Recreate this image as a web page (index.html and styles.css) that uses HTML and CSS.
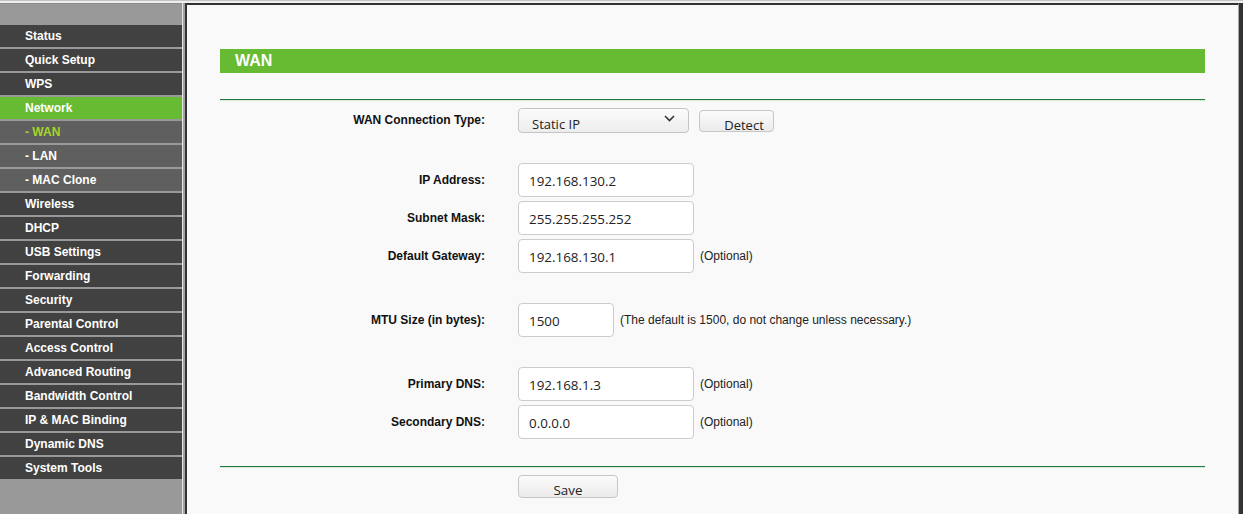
FILE: index.html
```html
<!DOCTYPE html>
<html>
<head>
<meta charset="utf-8">
<title>WAN</title>
<link rel="stylesheet" href="styles.css">
</head>
<body>
<div class="topline"></div>
<div class="frame">
  <nav class="sidebar">
    <ul class="menu">
      <li class="item">Status</li>
      <li class="item">Quick Setup</li>
      <li class="item">WPS</li>
      <li class="item active">Network</li>
      <li class="item sub current">- WAN</li>
      <li class="item sub">- LAN</li>
      <li class="item sub">- MAC Clone</li>
      <li class="item">Wireless</li>
      <li class="item">DHCP</li>
      <li class="item">USB Settings</li>
      <li class="item">Forwarding</li>
      <li class="item">Security</li>
      <li class="item">Parental Control</li>
      <li class="item">Access Control</li>
      <li class="item">Advanced Routing</li>
      <li class="item">Bandwidth Control</li>
      <li class="item">IP &amp; MAC Binding</li>
      <li class="item">Dynamic DNS</li>
      <li class="item">System Tools</li>
    </ul>
  </nav>
  <div class="divider"></div>
  <main class="content">
    <h1 class="title">WAN</h1>
    <div class="rule rule-top"></div>

    <div class="form">
      <div class="row row-type">
        <label class="label">WAN Connection Type:</label>
        <div class="field">
          <div class="select">
            <span class="select-clip"><span class="select-text">Static IP</span></span>
            <svg class="chevron" width="11" height="7" viewBox="0 0 11 7"><path d="M1 1 L5.5 5.5 L10 1" fill="none" stroke="#333" stroke-width="1.6"/></svg>
          </div>
          <button class="btn btn-detect">Detect</button>
        </div>
      </div>

      <div class="row row-input group">
        <label class="label">IP Address:</label>
        <div class="field"><input class="input" value="192.168.130.2"></div>
      </div>
      <div class="row row-input">
        <label class="label">Subnet Mask:</label>
        <div class="field"><input class="input" value="255.255.255.252"></div>
      </div>
      <div class="row row-input">
        <label class="label">Default Gateway:</label>
        <div class="field"><input class="input" value="192.168.130.1"><span class="note">(Optional)</span></div>
      </div>

      <div class="row row-input group">
        <label class="label">MTU Size (in bytes):</label>
        <div class="field"><input class="input input-short" value="1500"><span class="note">(The default is 1500, do not change unless necessary.)</span></div>
      </div>

      <div class="row row-input group">
        <label class="label">Primary DNS:</label>
        <div class="field"><input class="input" value="192.168.1.3"><span class="note">(Optional)</span></div>
      </div>
      <div class="row row-input">
        <label class="label">Secondary DNS:</label>
        <div class="field"><input class="input" value="0.0.0.0"><span class="note">(Optional)</span></div>
      </div>
    </div>

    <div class="rule rule-bottom"></div>
    <div class="actions">
      <button class="btn btn-save">Save</button>
    </div>
  </main>
</div>
</body>
</html>
```
FILE: styles.css
```css
html, body {
  margin: 0;
  padding: 0;
  height: 514px;
  overflow: hidden;
  background: #efefef;
  font-family: "Liberation Sans", Arial, sans-serif;
}

.topline {
  height: 1px;
  background: #c4c4c4;
  margin-bottom: 2px;
}

.frame {
  display: flex;
  height: 511px;
}

/* Sidebar */
.sidebar {
  width: 182px;
  flex: none;
  background: #999999;
  border-top: 1px solid #8a8a8a;
  box-sizing: border-box;
}

.menu {
  list-style: none;
  margin: 21px 0 0 0;
  padding: 0;
}

.item {
  height: 22px;
  line-height: 22px;
  margin-bottom: 2px;
  padding-left: 25px;
  background: #414141;
  color: #ffffff;
  font-size: 12px;
  font-weight: bold;
  white-space: nowrap;
}

.item.active {
  background: #66bb33;
}

.item.sub {
  background: #5f5f5f;
}

.item.current {
  color: #a6d52a;
}

.divider {
  width: 1px;
  flex: none;
  background: #e6e6e6;
  border-right: 2px solid #a3a3a3;
}

/* Content */
.content {
  flex: 1;
  background: #f9f9f9;
  border-top: 2px solid #333333;
  border-left: 2px solid #333333;
  border-right: 1px solid #a8a8a8;
  box-shadow: 4px 0 0 #333333;
  margin-right: 4px;
  padding: 0 33px 0 33px;
  box-sizing: border-box;
  display: flex;
  flex-direction: column;
}

.title {
  margin: 44px 0 0 0;
  height: 24px;
  line-height: 24px;
  padding-left: 15px;
  background: #66bb33;
  color: #ffffff;
  font-size: 16px;
  font-weight: bold;
}

.rule {
  height: 1px;
  background: #227a40;
  box-shadow: 0 1px 0 #d9e8dd;
}

.rule-top {
  margin-top: 26px;
}

.form {
  display: flex;
  flex-direction: column;
  gap: 4px;
  margin-top: 8px;
}

.row {
  display: grid;
  grid-template-columns: 265px auto;
  column-gap: 33px;
  align-items: center;
}

.row-type {
  height: 25px;
  align-items: start;
}

.row-type .label {
  line-height: 25px;
}

.row-input {
  height: 34px;
}

.row.group {
  margin-top: 26px;
}

.label {
  text-align: right;
  font-size: 12px;
  font-weight: bold;
  color: #111111;
  white-space: nowrap;
}

.field {
  display: flex;
  align-items: center;
}

.row-type .field {
  align-items: flex-start;
}

.select {
  width: 171px;
  height: 25px;
  box-sizing: border-box;
  border: 1px solid #c4c4c4;
  border-radius: 4px;
  background: linear-gradient(#fbfbfb, #ededed);
  display: flex;
  align-items: flex-start;
}

.select-clip {
  display: block;
  height: 20px;
  overflow: hidden;
  padding-left: 13px;
}

.select-text {
  display: block;
  padding-top: 8px;
  line-height: 14px;
  font-family: "Open Sans", "Noto Sans", sans-serif;
  font-size: 13px;
  color: #222222;
}

.chevron {
  margin-left: auto;
  margin-right: 13px;
  margin-top: 6px;
}

.btn {
  box-sizing: border-box;
  border: 1px solid #c6c6c6;
  border-radius: 4px;
  background: linear-gradient(#fbfbfb, #ebebeb);
  font-family: "Open Sans", "Noto Sans", sans-serif;
  font-size: 13px;
  line-height: 14px;
  color: #222222;
  margin: 0;
  text-align: center;
}

.btn-detect {
  width: 75px;
  height: 22px;
  margin-left: 10px;
  margin-top: 2px;
  padding: 7px 0 0 15px;
}

.input {
  width: 176px;
  height: 34px;
  box-sizing: border-box;
  border: 1px solid #cccccc;
  border-radius: 4px;
  background: #ffffff;
  padding: 2px 10px 0 10px;
  margin: 0;
  font-family: "Open Sans", "Noto Sans", sans-serif;
  font-size: 13.4px;
  color: #222222;
  outline: none;
}

.input-short {
  width: 96px;
}

.note {
  margin-left: 6px;
  font-size: 12px;
  color: #222222;
  white-space: nowrap;
}

.rule-bottom {
  margin-top: 27px;
}

.actions {
  margin-top: 8px;
  padding-left: 298px;
}

.btn-save {
  width: 100px;
  height: 23px;
  padding: 6px 0 0 0;
  font-size: 13.4px;
}
```
